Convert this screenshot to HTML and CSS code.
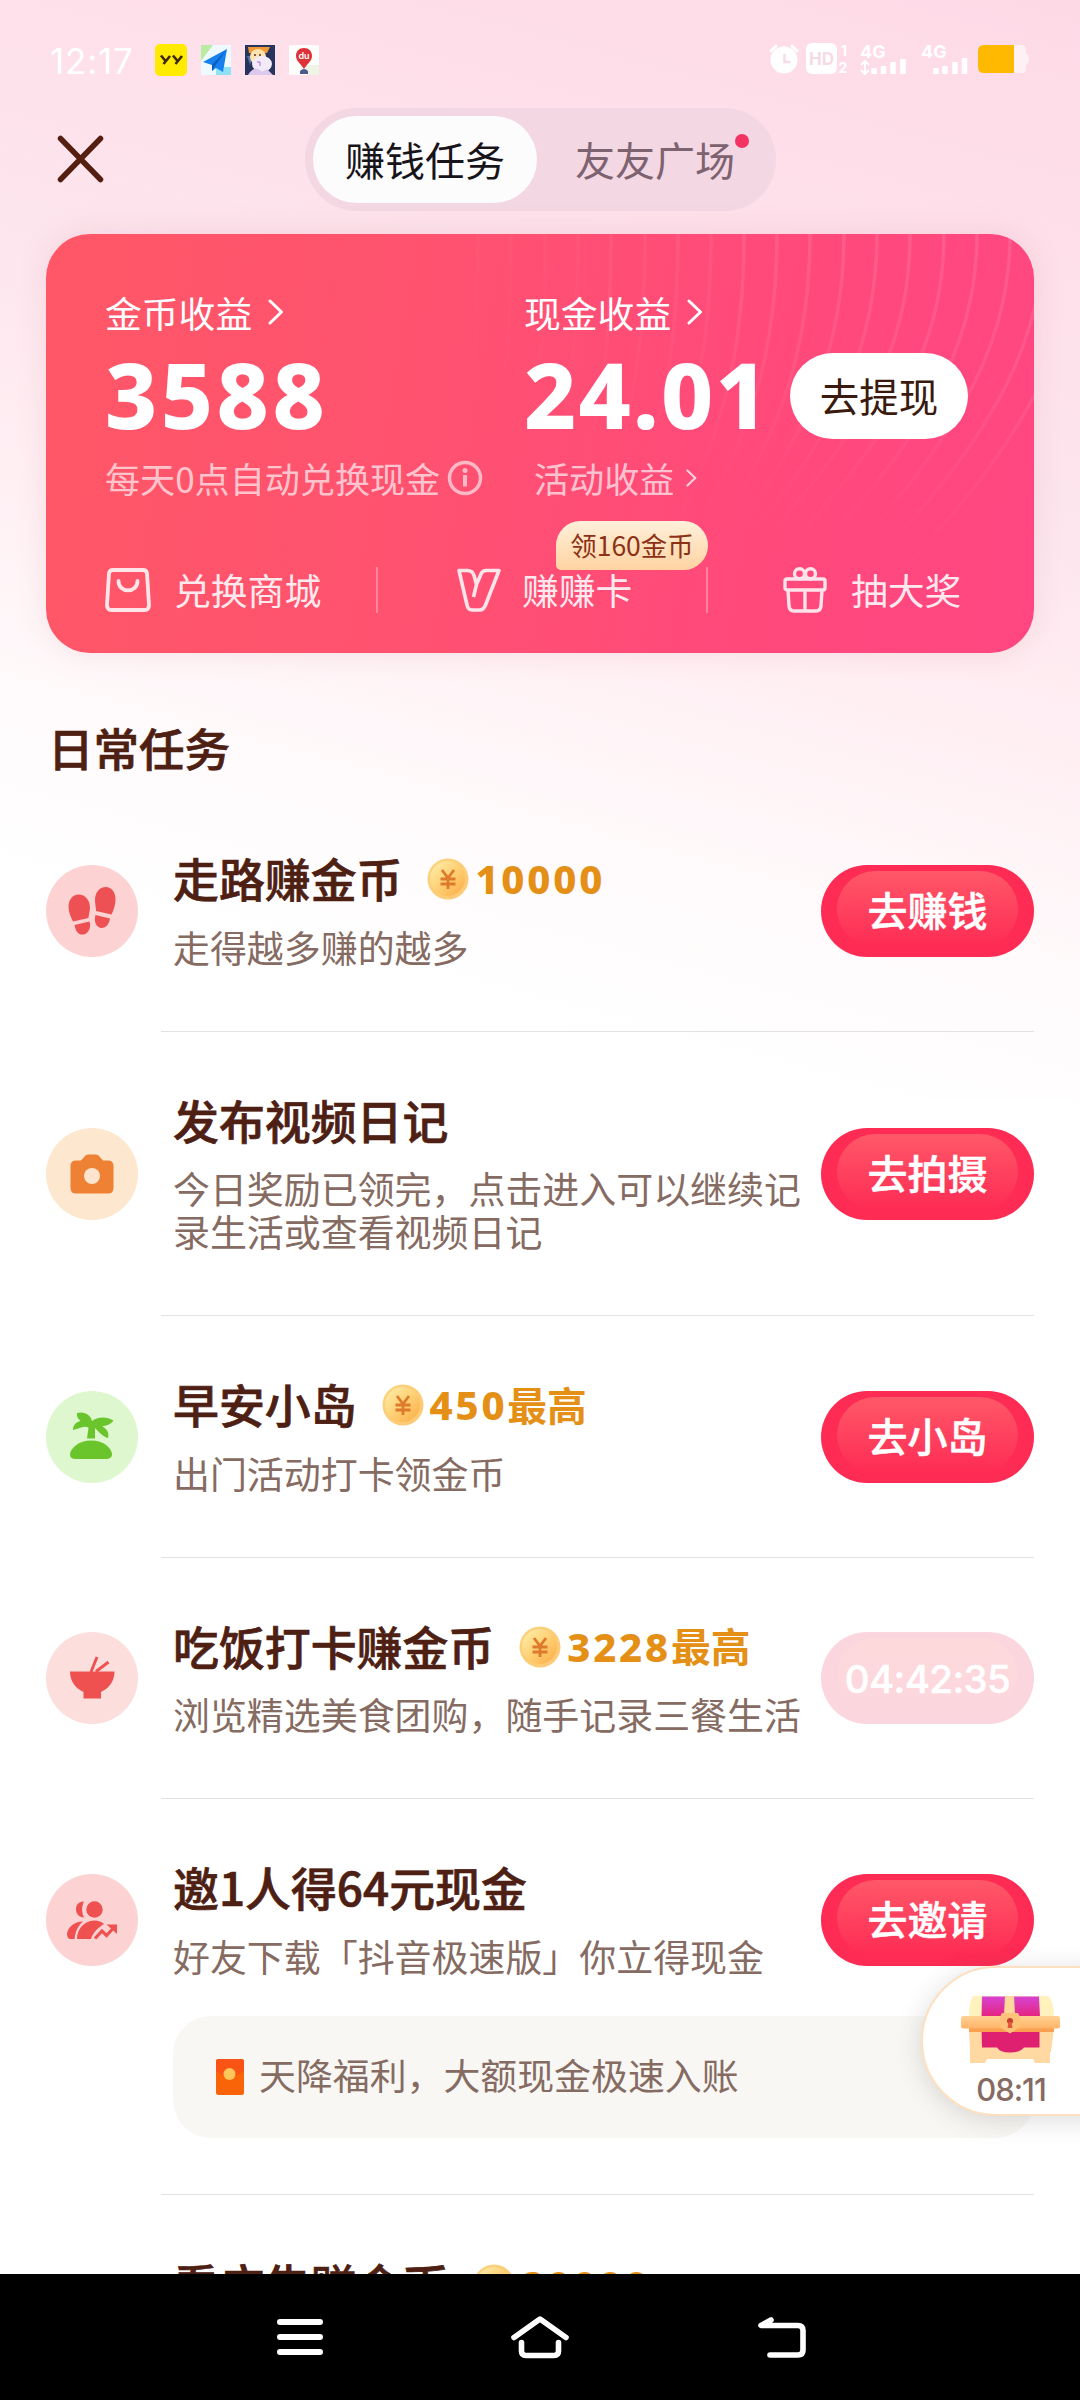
FILE: index.html
```html
<!DOCTYPE html>
<html lang="zh-CN">
<head>
<meta charset="utf-8">
<title>赚钱任务</title>
<link rel="stylesheet" href="styles.css">
</head>
<body>
<svg class="defs" width="0" height="0" aria-hidden="true">
  <defs>
    <linearGradient id="coinFill" x1="0" y1="0" x2="1" y2="1"><stop offset="0" stop-color="#fff0ae"/><stop offset=".5" stop-color="#ffd075"/><stop offset="1" stop-color="#f9ab45"/></linearGradient>
    <linearGradient id="coinRim" x1="0" y1="0" x2="1" y2="1"><stop offset="0" stop-color="#fbd27c"/><stop offset="1" stop-color="#fdc873"/></linearGradient>
    <symbol id="coin" viewBox="0 0 42 42">
      <circle cx="21" cy="21" r="20.5" fill="url(#coinRim)"/>
      <circle cx="20.5" cy="20.5" r="17.5" fill="url(#coinFill)"/>
      <path d="M15 12l6 8 6-8M21 20v11M13.500 21h15M13.500 26h15" fill="none" stroke="#dd7a2c" stroke-width="2.800"/>
    </symbol>
    <symbol id="chev" viewBox="0 0 16 26"><path d="M2 2l11.500 11L2 24" fill="none" stroke="#fff" stroke-width="3" stroke-linecap="round" stroke-linejoin="round"/></symbol>
  </defs>
</svg>
<div class="screen">
  <main class="page">
    <header class="status">
      <div class="status-left">
        <span class="time">12:17</span>
        <svg width="32" height="32" viewBox="0 0 32 32"><rect width="32" height="32" rx="5" fill="#ffea00"/><path d="M6 11.500l4.500 5.500m4.500-5l-6.500 8M18 11.500l4.500 5.500m4.500-5l-6.500 8" stroke="#3c2a08" stroke-width="2.600" fill="none"/></svg>
        <svg width="30" height="30" viewBox="0 0 30 30"><rect width="30" height="30" fill="#eefaff"/><path d="M0 0h12L0 16z" fill="#b9eba0"/><rect x="15" y="22" width="15" height="8" fill="#8fe2f5"/><path d="M26 4L2 17l9 3v6l4-3 7 4z" fill="#1681ee"/><path d="M26 4L11 20v6l3-5z" fill="#0c5cc0"/></svg>
        <svg width="30" height="30" viewBox="0 0 30 30"><rect width="30" height="30" fill="#26345e"/><path d="M3 2h22l-3 6H4z" fill="#f19a35"/><path d="M2 11h6l-3 9z" fill="#4d75a5"/><circle cx="13" cy="12" r="8" fill="#ffe2ad"/><ellipse cx="17" cy="19" rx="10" ry="8" fill="#f3eaf8"/><path d="M5 27q6-7 12 0l5-3 6 6H3z" fill="#dcc8ed"/><circle cx="10" cy="10" r="1" fill="#533"/><circle cx="15" cy="10" r="1" fill="#533"/><path d="M12 17h3v4" stroke="#b06bd3" fill="none"/></svg>
        <svg width="30" height="30" viewBox="0 0 30 30"><rect width="30" height="30" fill="#fdfdfb"/><path d="M16 20h14v10H18z" fill="#eff5e4"/><path d="M15 3c5 0 8 3.500 8 8 0 5-5 8-8 13-3-5-8-8-8-13 0-4.500 3-8 8-8z" fill="#dd3338"/><path d="M11 26q4-4 8 0v3h-8z" fill="#4c5a8c"/><text x="15" y="14" text-anchor="middle" class="du">du</text></svg>
      </div>
      <div class="status-right">
        <svg width="28" height="30" viewBox="0 0 28 30"><path d="M1 7l5-5M27 7l-5-5" stroke="#fff" stroke-width="3" stroke-linecap="round"/><circle cx="14" cy="16" r="13.500" fill="#fff"/><path d="M14.500 10v8h6" fill="none" stroke="#f7dce6" stroke-width="2.500"/></svg>
        <svg class="hd" width="44" height="32" viewBox="0 0 44 32"><rect width="31" height="31" rx="6" fill="#fff"/><text x="15.500" y="22" text-anchor="middle" class="hdt">HD</text><text x="38" y="13" text-anchor="middle" class="sim">1</text><text x="37" y="30" text-anchor="middle" class="sim">2</text></svg>
        <svg class="sig1" width="50" height="32" viewBox="0 0 50 32"><text x="0" y="15" class="net">4G</text><path d="M5 18v12M1 22l4-4 4 4M1 27l4 4 4-4" stroke="#fff" stroke-width="2" fill="none"/><path d="M14 31v-6M23.500 31v-8M33 31V19M43 31V16" stroke="#fff" stroke-width="5.500"/></svg>
        <svg class="sig2" width="50" height="32" viewBox="0 0 50 32"><text x="0" y="15" class="net">4G</text><path d="M15 31v-6M24 31v-8M34 31V19M43.500 31V15" stroke="#fff" stroke-width="5.500"/></svg>
        <svg class="bat" width="52" height="28" viewBox="0 0 52 28"><path d="M34 0h9q5 0 5 5v3q3 2 3 6t-3 6v3q0 5-5 5h-9z" fill="#fdf1f4"/><path d="M6 0h30v28H6q-6 0-6-6V6q0-6 6-6z" fill="#ffb900"/></svg>
      </div>
    </header>

    <nav class="top">
      <svg class="close" width="50" height="50" viewBox="0 0 50 50"><path d="M4.500 4.500L44.500 45.500M44.500 4.500L4.500 45.500" stroke="#541f11" stroke-width="5.500" stroke-linecap="round"/></svg>
      <div class="tabs">
        <span class="tab on">赚钱任务</span>
        <span class="tab">友友广场<i class="dot"></i></span>
      </div>
    </nav>

    <section class="card">
      <svg class="rings" width="988" height="419" viewBox="0 0 988 419">
        <defs><linearGradient id="fade" gradientUnits="userSpaceOnUse" x1="860" y1="0" x2="760" y2="340"><stop offset="0" stop-color="#fff"/><stop offset=".35" stop-color="#fff" stop-opacity=".7"/><stop offset=".75" stop-color="#fff" stop-opacity=".12"/><stop offset="1" stop-color="#fff" stop-opacity="0"/></linearGradient></defs>
        <g fill="none" stroke="url(#fade)" stroke-width="3.500">
          <g opacity=".04"><path d="M432 0C432 90 428 150 415 220M465 0C465 90 461 160 445 230M499 0C499 95 494 165 474 240M532 0C532 95 526 170 502 250"/></g>
          <g opacity=".07"><path d="M565 0C565 100 558 175 529 260M599 0C599 100 589 180 556 270M632 0C632 105 620 185 580 280M665 0C665 105 650 190 604 290"/></g>
          <g opacity=".105"><path d="M698 0C698 110 680 195 625 300M731 0C731 110 708 200 642 310M764 0C764 115 735 205 656 320M798 0C798 115 760 210 668 325M831 0C831 120 785 210 680 330M864 0C864 120 812 210 690 335M898 0C898 120 840 215 706 350M931 0C931 120 870 220 725 365M964 0C964 120 902 225 746 380M997 0C997 120 934 230 765 390M1030 0C1030 120 964 240 790 400"/></g>
        </g>
      </svg>
      <div class="balances">
        <div class="balance">
          <div class="label">金币收益<svg width="16" height="26"><use href="#chev"/></svg></div>
          <div class="amount">3588</div>
          <div class="sub">每天0点自动兑换现金<svg class="info" width="36" height="36" viewBox="0 0 36 36"><circle cx="18" cy="18" r="15.500" fill="none" stroke="#fff" stroke-width="3.500"/><circle cx="18" cy="10.500" r="2.500" fill="#fff"/><path d="M18 15v11.500" stroke="#fff" stroke-width="4"/></svg></div>
        </div>
        <div class="balance">
          <div class="label">现金收益<svg width="16" height="26"><use href="#chev"/></svg></div>
          <div class="amount cash"><span>24.01</span><a class="withdraw">去提现</a></div>
          <div class="sub indent">活动收益<svg class="small" width="11" height="18"><use href="#chev"/></svg></div>
        </div>
      </div>
      <div class="actions">
        <a class="action"><svg width="46" height="44" viewBox="0 0 46 44"><path d="M8 2h30q3.500 0 4 3.500L44 37q0 5-4.500 5h-33Q2 42 2 37L4 5.500Q4.500 2 8 2z" fill="none" stroke="#fff" stroke-width="3.800"/><path d="M13.500 13c0 12.500 19 12.500 19 0" fill="none" stroke="#fff" stroke-width="3.800" stroke-linecap="round"/></svg><span>兑换商城</span></a>
        <a class="action mid"><svg width="44" height="44" viewBox="0 0 44 44"><path d="M2 2.500h8.500q5 0 6.500 5l2.500 9 5-11.500q1.500-2.500 4.500-2.500H42L28.500 37q-2 5-5.500 5h-8q-4 0-5-5z M19.500 16.500L16.500 29" fill="none" stroke="#fff" stroke-width="3.600" stroke-linejoin="round"/></svg><span>赚赚卡</span><span class="badge">领160金币</span></a>
        <a class="action last"><svg width="44" height="46" viewBox="0 0 44 46"><rect x="2" y="12" width="40" height="11" rx="2" fill="none" stroke="#fff" stroke-width="3.400"/><path d="M5 23l1 16q.5 5 5 5h22q4.500 0 5-5l1-16M22 23v21" fill="none" stroke="#fff" stroke-width="3.400"/><circle cx="16.500" cy="6.800" r="5" fill="none" stroke="#fff" stroke-width="3.400"/><circle cx="27.500" cy="6.800" r="5" fill="none" stroke="#fff" stroke-width="3.400"/></svg><span>抽大奖</span></a>
      </div>
    </section>

    <h2 class="heading">日常任务</h2>

    <ul class="tasks">
      <li class="task">
        <span class="ico rose"><svg viewBox="0 0 92 92"><path d="M22.500 42c0-7 4-12.500 10-12.500 7 0 11.500 6 11.500 13 0 4-1.500 8-1.500 10.500L27 56.500c-2-4-4.500-9-4.500-14.500zM28.500 60l15-3.500c2 6-1 12-6 13-4.500.8-8-3-9-9.500zM69.500 34c0-7-4-12-9.500-12-7 0-11 6-11 13 0 4 1 8 1 11l15.500 3.500c2-4 4-9.500 4-15.500zM49.500 50l14.500 3.500c-1 6-4.500 10-9 9.500-4.500-.8-7.500-6-5.500-13z" fill="#ee5153"/></svg></span>
        <div class="body"><h3>走路赚金币<span class="coin"><svg width="42" height="42"><use href="#coin"/></svg>10000</span></h3><p>走得越多赚的越多</p></div>
        <a class="btn">去赚钱</a>
      </li>
      <li class="task">
        <span class="ico peach"><svg viewBox="0 0 92 92"><path d="M30 32.500h5l4-4.500q1-1.500 3-1.500h8q2 0 3 1.500l4 4.500h5q5.500 0 5.500 5.500v22q0 5.500-5.500 5.500H30q-5.500 0-5.500-5.500V38q0-5.500 5.500-5.500z" fill="#ee8133"/><circle cx="46" cy="48" r="8" fill="#fde4cf"/></svg></span>
        <div class="body"><h3>发布视频日记</h3><p>今日奖励已领完，点击进入可以继续记录生活或查看视频日记</p></div>
        <a class="btn">去拍摄</a>
      </li>
      <li class="task">
        <span class="ico green"><svg viewBox="0 0 92 92"><path d="M45 49.500c13 0 21 8 21 14 0 3-3 4.500-6 4.500H30c-4 0-6-1.500-6-4.500 0-6 9-14 21-14z" fill="#6ac42b"/><path d="M41 47.500l1.500-11c-4-2-9 1-15.500 2.500 0-5 3-8 7.500-9-1.500-2-4-3-3.500-8 8-2 13.500 2 15 8 5-4 14-5 21.500-.5-3 4-7 5.500-11.500 5.500 5 3 7.500 7 6 12-6-2-9-6-13-10v10.500z" fill="#6ac42b"/></svg></span>
        <div class="body"><h3>早安小岛<span class="coin"><svg width="42" height="42"><use href="#coin"/></svg>450<b>最高</b></span></h3><p>出门活动打卡领金币</p></div>
        <a class="btn">去小岛</a>
      </li>
      <li class="task">
        <span class="ico blush"><svg viewBox="0 0 92 92"><path d="M24 39.500h44.500c0 9-5 16.500-13.500 20.500v6.500H37.500V60C29 56 24 48.500 24 39.500z" fill="#ee5150"/><path d="M45 40l6-15M50 39.500l12.500-9.500" stroke="#ee5150" stroke-width="2.900"/></svg></span>
        <div class="body"><h3>吃饭打卡赚金币<span class="coin"><svg width="42" height="42"><use href="#coin"/></svg>3228<b>最高</b></span></h3><p>浏览精选美食团购，随手记录三餐生活</p></div>
        <a class="btn wait">04:42:35</a>
      </li>
      <li class="task invite">
        <span class="ico rose"><svg viewBox="0 0 92 92" fill="#ee5150"><circle cx="48.500" cy="35.500" r="8.200"/><path d="M38 27.500c-6 0-8 4-8 8s3 8 8 8c-2.500-5-2.500-11 0-16zM37 47.500c-9 0-15 6-16 12 0 3 1 5.500 3.500 5.500h4c1-7 3-13 8.500-17.500zM31 65c0-10 7-18 17-18.500 4.500 0 8 1.500 10 3.500-5 3-11 8-13 15z"/><path d="M49 64.500l7-7.500 4.500 4.500 7-7.500" fill="none" stroke="#ee5150" stroke-width="3.200"/><path d="M60.500 50.500H71v9.500z"/></svg></span>
        <div class="body"><h3>邀1人得64元现金</h3><p>好友下载「抖音极速版」你立得现金</p></div>
        <a class="btn">去邀请</a>
        <div class="note"><svg width="28" height="36" viewBox="0 0 28 36"><rect width="28" height="36" rx="2.500" fill="#fa6408"/><path d="M0 2.500Q0 0 2.500 0h23Q28 0 28 2.500V12Q14 24 0 12z" fill="#f95316"/><circle cx="13.500" cy="15" r="6" fill="#ffc65a"/></svg><span>天降福利，大额现金极速入账</span></div>
      </li>
      <li class="task peek">
        <div class="body"><h3>看广告赚金币<span class="coin"><svg width="42" height="42"><use href="#coin"/></svg>20000</span></h3></div>
      </li>
    </ul>
  </main>

  <aside class="chest">
    <svg width="100" height="72" viewBox="0 0 100 72">
      <defs><linearGradient id="lid" x1="0" y1="0" x2="0" y2="1"><stop offset="0" stop-color="#d743d2"/><stop offset="1" stop-color="#e5247d"/></linearGradient><linearGradient id="gold" x1="0" y1="0" x2="0" y2="1"><stop offset="0" stop-color="#ffd293"/><stop offset="1" stop-color="#ffb467"/></linearGradient></defs>
      <path d="M12 1h75q6 5 6 21H8Q8 7 12 1z" fill="#fff2bd"/>
      <path d="M21 1.500h24V22H20.500zM53 1.500h25l1 20.500H53z" fill="url(#lid)"/>
      <path d="M8 33h85l-3 24h-1v11H74l-2-4H26l-2 4H9V57z" fill="#ffd8a2"/>
      <path d="M20.500 33h58v19.500H63q-4 5-14 5t-13-5H21z" fill="#df1f70"/>
      <path d="M8 33h85v4H8z" fill="#fb9f50"/>
      <rect x="0" y="21" width="99" height="12.500" rx="2.500" fill="url(#gold)"/>
      <path d="M44 1h9l1 18H43z" fill="#ffd99c"/>
      <path d="M41 18h16l2 4v10l-10 6.500L39 32V22z" fill="#ffc27b"/><circle cx="49" cy="26" r="3" fill="#c83e31"/><path d="M47.500 27h3l1 6h-5z" fill="#e4583a"/>
    </svg>
    <span>08:11</span>
  </aside>

  <footer class="sysnav">
    <svg width="46" height="36" viewBox="0 0 46 36"><path d="M3 3h40M3 18h40M3 33h40" stroke="#fff" stroke-width="6" stroke-linecap="round"/></svg>
    <svg width="60" height="44" viewBox="0 0 60 44"><path d="M4 22.500L30 4l26 18.500M11.500 27.500V36q0 4.500 4.500 4.500h28q4.500 0 4.500-4.500v-8.500" fill="none" stroke="#fff" stroke-width="5.600" stroke-linecap="round" stroke-linejoin="round"/></svg>
    <svg width="50" height="42" viewBox="0 0 50 42"><path d="M14 4L4 9.500h37q5 0 5 5V34q0 5-5 5H13" fill="none" stroke="#fff" stroke-width="5.600" stroke-linecap="round" stroke-linejoin="round"/></svg>
  </footer>
</div>
</body>
</html>
```
FILE: styles.css
```css
* { box-sizing: border-box; margin: 0; padding: 0; }
body { background: #fff; font-family: "Noto Sans CJK SC", "Noto Sans", sans-serif; }
.defs { display: block; }
svg { flex: none; overflow: visible; }
.screen { position: relative; width: 1080px; height: 2400px; overflow: hidden; display: flex; flex-direction: column; }
.page {
  height: 2274px; flex: none; overflow: hidden;
  background: linear-gradient(195deg, #fdd9e6 0, #fee0ea 20%, #fde5ed 37%, #fff0f4 56%, #fffafb 70%, #fff 84%) no-repeat 0 0 / 1080px 1100px, #fff;
}

/* status bar */
.status { height: 108px; display: flex; justify-content: space-between; align-items: flex-start; padding: 42px 50px 0 50px; }
.status-left, .status-right { display: flex; align-items: center; }
.status-left { gap: 14px; }
.status-right { padding-top: 1px; }
.time { width: 91px; font: 400 35px/32px "Inter", sans-serif; color: #fff; padding-top: 3px; letter-spacing: .8px; }
.du { font: 600 9px "Inter", sans-serif; fill: #fff; }
.hdt { font: 700 17px "Inter", sans-serif; fill: #f6dbe5; }
.sim { font: 700 14px "Inter", sans-serif; fill: #fff; }
.net { font: 700 18px "Inter", sans-serif; fill: #fff; }
.hd { margin-left: 8px; }
.sig1 { margin-left: 10px; }
.sig2 { margin-left: 11px; }
.bat { margin-left: 7px; }

/* top tabs */
.top { height: 126px; display: flex; align-items: flex-start; padding-left: 56px; }
.close { margin: 26px 199px 0 0; }
.tabs { display: flex; width: 471px; height: 103px; padding: 8px 0 8px 8px; border-radius: 52px; background: #f3d7e2; }
.tab { position: relative; flex: none; width: 224px; height: 87px; border-radius: 44px; text-align: center; font-size: 40px; line-height: 86px; color: #7d6270; }
.tab + .tab { width: 236px; }
.tab.on { background: #fdfcfd; color: #17141a; }
.dot { position: absolute; left: 198px; top: 18px; width: 14px; height: 14px; border-radius: 50%; background: #f23363; }

/* balance card */
.card {
  position: relative; width: 988px; height: 419px; margin-left: 46px; padding: 58px 0 0 59px;
  border-radius: 44px; color: #fff; background: linear-gradient(100deg, #ff5766 0%, #ff5270 38%, #ff4a7a 68%, #ff4682 100%);
  box-shadow: 0 0 30px rgba(190, 110, 130, .16);
}
.rings { position: absolute; inset: 0; border-radius: 44px; overflow: hidden; }
.balances { position: relative; display: grid; grid-template-columns: 419px 1fr; }
.label { display: flex; align-items: center; gap: 16px; height: 44px; padding-bottom: 5px; font-size: 36.8px; line-height: 40px; }
.label svg { margin-top: 1px; }
.amount { display: flex; align-items: center; height: 86px; margin-top: 17px; font: 800 90.500px/81px "Noto Sans", sans-serif; letter-spacing: 3.500px; padding-bottom: 4px; }
.cash { letter-spacing: 2.200px; padding: 0; }
.cash span { padding-bottom: 4px; }
.withdraw { width: 178px; height: 86px; margin-left: auto; margin-right: 66px; border-radius: 43px; background: #fff; color: #3a1a0e; font: 400 39.500px/84px "Noto Sans CJK SC", sans-serif; letter-spacing: 0; text-align: center; }
.sub { display: flex; align-items: center; height: 44px; margin-top: 18px; padding-bottom: 3px; font-size: 35.100px; line-height: 40px; color: rgba(255, 255, 255, .68); }
.sub svg { opacity: .6; margin-left: 7px; }
.sub .small { margin-left: 12px; opacity: .75; }
.indent { padding-left: 10px; }
.actions { position: relative; display: flex; align-items: center; height: 46px; margin-top: 66px; font-size: 36.800px; line-height: 40px; color: rgba(255, 255, 255, .9); }
.action { position: relative; display: flex; align-items: center; height: 46px; width: 273px; border-right: 2px solid rgba(255, 255, 255, .3); gap: 23px; }
.action span { padding-bottom: 2px; }
.action svg { opacity: .85; }
.mid { width: 330px; padding-left: 79px; gap: 21px; }
.last { width: auto; border: 0; padding-left: 75px; gap: 24px; }
.action .badge { position: absolute; left: 178px; top: -46px; width: 152px; height: 49px; padding: 0; border-radius: 25px 25px 25px 5px; background: linear-gradient(#fff0db, #ffd3a1); color: #8c3116; font-size: 26.500px; line-height: 47px; text-align: center; }

/* tasks */
.heading { margin: 64px 0 0 48px; height: 73px; font-size: 45.500px; line-height: 60px; font-weight: 500; color: #4d2013; -webkit-text-stroke: .7px #4d2013; }
.tasks { list-style: none; }
.task { position: relative; display: grid; grid-template-columns: 127px 1fr 213px; align-items: center; padding: 60px 46px; row-gap: 35px; }
.task.invite { padding-bottom: 57px; }
.task.peek { padding-left: 173px; padding-top: 61px; grid-template-columns: 1fr; }
.task::after { content: ""; position: absolute; left: 161px; right: 46px; bottom: 0; height: 1px; background: #e3e2e2; }
.ico { width: 92px; height: 92px; border-radius: 50%; }
.ico svg { display: block; width: 92px; height: 92px; }
.rose { background: #fcd3d2; }
.peach { background: #fde7cf; }
.green { background: #def7cf; }
.blush { background: #fcdedd; }
.body { width: 640px; margin-top: -3px; }
.body h3 { display: flex; align-items: center; height: 60.500px; font-size: 45.900px; line-height: 56px; font-weight: 500; color: #4d2013; -webkit-text-stroke: .7px #4d2013; }
.body p { margin-top: 18px; margin-bottom: 3px; font-size: 36.950px; line-height: 43px; color: #856b62; }
.coin { display: flex; align-items: center; gap: 6px; margin-left: 25px; padding-top: 4px; font: 800 40px/54px "Noto Sans", sans-serif; letter-spacing: 2.800px; color: #e48f16; -webkit-text-stroke: 0; }
.coin b { font: 700 39.800px/50px "Noto Sans CJK SC", sans-serif; letter-spacing: 0; margin-left: -6px; padding-bottom: 3px; }
.btn {
  position: relative; isolation: isolate; width: 213px; height: 92px; border-radius: 46px; background: #fe2b54; color: #fff;
  font-size: 40px; line-height: 89px; font-weight: 500; text-align: center; -webkit-text-stroke: .5px #fff;
}
.btn::before { content: ""; position: absolute; z-index: -1; left: 16px; right: 16px; top: 6px; height: 76px; border-radius: 38px; background: linear-gradient(#ff5868, rgba(255, 43, 84, 0)); }
.wait { background: #fcd6de; font: 500 38.500px/95px "Inter", sans-serif; letter-spacing: -.6px; }
.wait::before { background: linear-gradient(#fdd9db, #fcd6de); }
.note { grid-column: 2 / 4; display: flex; align-items: center; gap: 15px; height: 122px; padding-left: 43px; border-radius: 38px; background: #f8f7f4; color: #856b62; font-size: 36.900px; line-height: 44px; }
.note span { padding-bottom: 5px; }

/* floating chest */
.chest { position: absolute; left: 921px; top: 1966px; width: 180px; height: 150px; display: flex; flex-direction: column; align-items: flex-start; padding: 27px 0 0 38px; border: 2px solid #fde0c0; border-radius: 75px 0 0 75px; background: #fff; box-shadow: 0 4px 26px rgba(70, 60, 60, .18); }
.chest span { width: 100px; margin-top: 3px; text-align: center; font: 500 31px/40px "Inter", sans-serif; letter-spacing: -1px; color: #856b62; }

/* system navigation */
.sysnav { height: 126px; background: #000; display: grid; grid-template-columns: 46px 60px 50px; column-gap: 187px; align-items: center; padding-left: 277px; }
```
